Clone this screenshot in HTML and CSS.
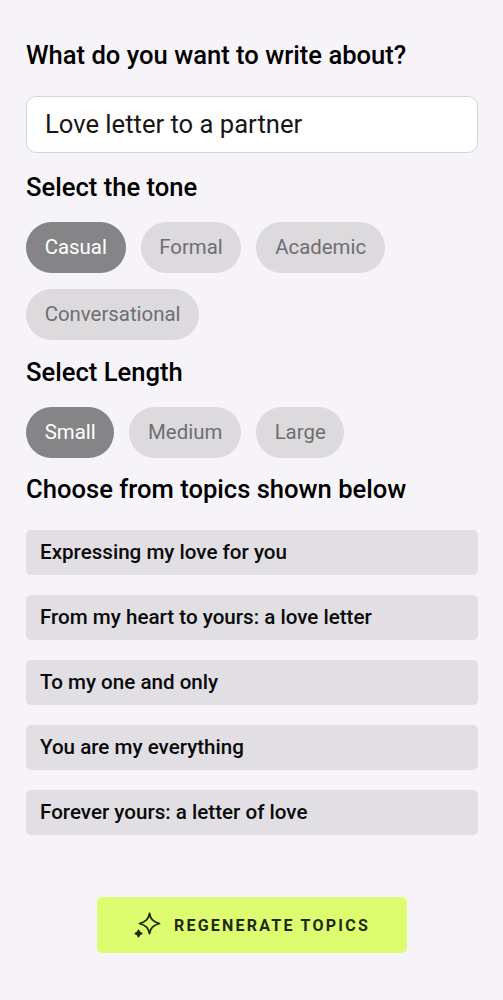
FILE: index.html
```
<!DOCTYPE html>
<html lang="en">
<head>
<meta charset="utf-8">
<title>Write</title>
<link rel="stylesheet" href="styles.css">
</head>
<body>
<main class="page">
  <h2 class="title first">What do you want to write about?</h2>
  <div class="input">Love letter to a partner</div>
  <h2 class="title tone">Select the tone</h2>
  <div class="chips">
    <span class="chip on">Casual</span>
    <span class="chip">Formal</span>
    <span class="chip">Academic</span>
    <span class="chip">Conversational</span>
  </div>
  <h2 class="title length">Select Length</h2>
  <div class="chips">
    <span class="chip on">Small</span>
    <span class="chip">Medium</span>
    <span class="chip">Large</span>
  </div>
  <h2 class="title topics-title">Choose from topics shown below</h2>
  <div class="topics">
    <div class="topic">Expressing my love for you</div>
    <div class="topic">From my heart to yours: a love letter</div>
    <div class="topic">To my one and only</div>
    <div class="topic">You are my everything</div>
    <div class="topic">Forever yours: a letter of love</div>
  </div>
  <div class="action">
    <button class="regen" type="button">
      <svg class="spark" viewBox="0 0 27 27" width="27" height="27" fill="none" stroke="#1f2a14" stroke-width="1.8" stroke-linejoin="round">
        <path d="M15.5 1.5 C16.5 7 19 9.5 25.5 11.5 C19 13.5 16.5 16 15.5 21.5 C14.5 16 12 13.5 5.5 11.5 C12 9.5 14.5 7 15.5 1.5 Z"/>
        <path d="M4.5 18.5 C4.9 20.5 5.6 21.1 7.5 21.5 C5.6 21.9 4.9 22.5 4.5 24.5 C4.1 22.5 3.4 21.9 1.5 21.5 C3.4 21.1 4.1 20.5 4.5 18.5 Z" fill="#1f2a14"/>
      </svg>
      <span>REGENERATE TOPICS</span>
    </button>
  </div>
</main>
</body>
</html>
```
FILE: styles.css
```
* { box-sizing: border-box; }
html, body { margin: 0; padding: 0; }
body {
  width: 503px;
  height: 1000px;
  overflow: hidden;
  background: #f6f4f8;
  font-family: Roboto, "Liberation Sans", sans-serif;
}
.page { padding: 0 25px 0 26px; }
.title {
  margin: 0;
  padding-bottom: 1px;
  font-size: 25.6px;
  line-height: 31px;
  font-weight: 500;
  color: #000;
}
.first { padding-top: 40px; }
.input {
  margin-top: 24px;
  height: 57px;
  padding: 0 18px 2px;
  display: flex;
  align-items: center;
  background: #fff;
  border: 1px solid #d6d4d8;
  border-radius: 10px;
  font-size: 25.6px;
  color: #161616;
}
.tone { margin-top: 19px; }
.chips {
  display: flex;
  flex-wrap: wrap;
  gap: 16px 15px;
  margin-top: 18px;
}
.chip {
  height: 51px;
  padding: 0 18.7px 1px;
  display: flex;
  align-items: center;
  border-radius: 26px;
  background: #dcdadd;
  color: #6f6e72;
  font-size: 20.4px;
}
.chip.on { background: #858486; color: #fff; }
.length { margin-top: 17px; }
.topics-title { margin-top: 16px; }
.topics {
  display: flex;
  flex-direction: column;
  gap: 20px;
  margin-top: 24px;
}
.topic {
  height: 45px;
  padding: 0 14px 1px;
  display: flex;
  align-items: center;
  background: #e1dfe3;
  border-radius: 5px;
  font-size: 20.6px;
  font-weight: 500;
  color: #0a0a0a;
}
.action {
  display: flex;
  justify-content: center;
  margin-top: 62px;
}
.regen {
  width: 310px;
  height: 56px;
  display: flex;
  align-items: center;
  justify-content: center;
  gap: 13px;
  border: 0;
  border-radius: 5px;
  background: #defc70;
  color: #1f2a14;
  font-family: inherit;
  font-size: 16px;
  font-weight: 700;
  letter-spacing: 2.25px;
}
```
